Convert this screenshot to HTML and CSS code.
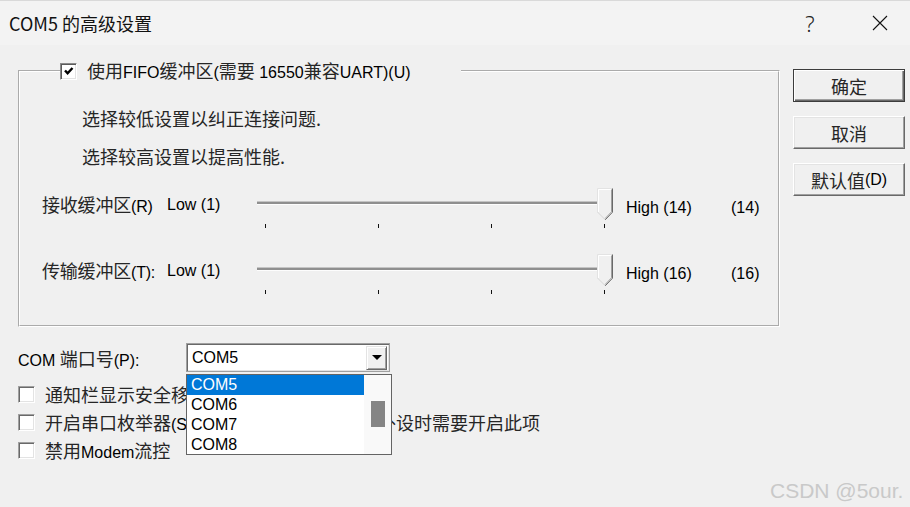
FILE: index.html
```html
<!DOCTYPE html>
<html lang="zh-CN">
<head>
<meta charset="utf-8">
<title>COM5 的高级设置</title>
<link rel="stylesheet" href="styles.css">
</head>
<body>
<header class="titlebar">
  <span class="title">COM5 的高级设置</span>
  <span class="tb-btn help">?</span>
  <span class="tb-btn close">
    <svg width="16" height="16" viewBox="0 0 16 16"><path d="M1 1 L15 15 M15 1 L1 15" stroke="#111" stroke-width="1.1" fill="none"/></svg>
  </span>
</header>

<div class="main">
  <fieldset class="group">
    <legend class="group-legend">
      <span class="cb cb-checked">
        <svg width="14" height="14" viewBox="0 0 14 14"><path d="M3 6.5 L5.6 9.2 L10.5 4" stroke="#000" stroke-width="2.4" fill="none"/></svg>
      </span>
      <span class="legend-text"><span class="zh">使用</span>FIFO<span class="zh">缓冲区</span>(<span class="zh">需要</span> 16550<span class="zh">兼容</span>UART)(U)</span>
    </legend>

    <p class="hint hint-first zh">选择较低设置以纠正连接问题.</p>
    <p class="hint zh">选择较高设置以提高性能.</p>

    <div class="slider-row slider-first">
      <span class="row-label"><span class="zh">接收缓冲区</span>(R)</span>
      <span class="low">Low (1)</span>
      <div class="track-area">
        <div class="track"></div>
        <div class="ticks"><i></i><i></i><i></i><i></i></div>
        <svg class="thumb" width="17" height="35" viewBox="0 0 17 35">
          <path d="M0.5 0.5 H15.5 V24 L8 32 L0.5 24 Z" fill="#f0f0f0"/>
          <path d="M0.5 24 V0.5 H15.5" fill="none" stroke="#e3e3e3"/>
          <path d="M1.5 24 V1.5 H14.5" fill="none" stroke="#fff"/>
          <path d="M15.5 0.5 V24.2 L8 32" fill="none" stroke="#696969"/>
          <path d="M14.5 1.5 V23.8 L8 30.6" fill="none" stroke="#a0a0a0"/>
          <path d="M0.5 24 L8 31.5" fill="none" stroke="#d6d6d6"/>
        </svg>
      </div>
      <span class="high">High (14)</span>
      <span class="value">(14)</span>
    </div>

    <div class="slider-row">
      <span class="row-label"><span class="zh">传输缓冲区</span>(T):</span>
      <span class="low">Low (1)</span>
      <div class="track-area">
        <div class="track"></div>
        <div class="ticks"><i></i><i></i><i></i><i></i></div>
        <svg class="thumb" width="17" height="35" viewBox="0 0 17 35">
          <path d="M0.5 0.5 H15.5 V24 L8 32 L0.5 24 Z" fill="#f0f0f0"/>
          <path d="M0.5 24 V0.5 H15.5" fill="none" stroke="#e3e3e3"/>
          <path d="M1.5 24 V1.5 H14.5" fill="none" stroke="#fff"/>
          <path d="M15.5 0.5 V24.2 L8 32" fill="none" stroke="#696969"/>
          <path d="M14.5 1.5 V23.8 L8 30.6" fill="none" stroke="#a0a0a0"/>
          <path d="M0.5 24 L8 31.5" fill="none" stroke="#d6d6d6"/>
        </svg>
      </div>
      <span class="high">High (16)</span>
      <span class="value">(16)</span>
    </div>
  </fieldset>

  <div class="buttons">
    <div class="btn btn-default"><span class="zh">确定</span></div>
    <div class="btn"><span class="zh">取消</span></div>
    <div class="btn"><span class="zh">默认值</span>(D)</div>
  </div>
</div>

<div class="bottom">
  <div class="port-row">
    <span class="port-label">COM <span class="zh">端口号</span>(P):</span>
    <div class="combo">
      <span class="combo-value">COM5</span>
      <span class="combo-btn"><i class="arrow"></i></span>
      <div class="dropdown">
        <ul class="options">
          <li class="selected">COM5</li>
          <li>COM6</li>
          <li>COM7</li>
          <li>COM8</li>
        </ul>
        <div class="scrollbar"><div class="scroll-thumb"></div></div>
      </div>
    </div>
  </div>

  <div class="checks">
    <div class="check-row"><span class="cb"></span><span class="zh">通知栏显示安全移除硬件图标</span></div>
    <div class="check-row"><span class="cb"></span><span><span class="zh">开启串口枚举器</span>(Serial Enumerator)&nbsp;&nbsp;&nbsp;<span class="zh">，连接外设时需要开启此项</span></span></div>
    <div class="check-row"><span class="cb"></span><span><span class="zh">禁用</span>Modem<span class="zh">流控</span></span></div>
  </div>
</div>

<div class="watermark">CSDN @5our.</div>
</body>
</html>
```

FILE: styles.css
```css
* { box-sizing: border-box; }

body {
  margin: 0;
  width: 910px;
  height: 507px;
  overflow: hidden;
  position: relative;
  background: #f0f0f0;
  font-family: "Liberation Sans", "Noto Sans CJK SC", sans-serif;
  font-size: 16px;
  color: #000;
}

.zh {
  font-family: "Noto Sans CJK SC", "Liberation Sans", sans-serif;
  font-size: 18px;
  color: #262626;
}

/* title bar */
.titlebar {
  height: 45px;
  display: flex;
  align-items: center;
  padding: 0 7px 0 9px;
  background: #f3f3f3;
  border-top: 1px solid #d9d9d9;
}
.title {
  flex: 1;
  font-family: "Noto Sans CJK SC", sans-serif;
  font-size: 18px;
  color: #111;
}
.tb-btn {
  width: 46px;
  display: flex;
  justify-content: center;
  align-items: center;
}
.help {
  font-family: "Noto Sans", sans-serif;
  font-weight: 300;
  font-size: 22px;
  color: #222;
}
.close { margin-left: 24px; }

/* main area */
.main {
  display: flex;
  align-items: flex-start;
  padding: 15px 0 0 18px;
}

.group {
  margin: 0;
  width: 762px;
  min-width: 0;
  border: 2px groove #fff;
  padding: 0 0 9px 0;
}
.group-legend {
  margin-left: 40px;
  padding: 0 50px 0 0;
  height: 22px;
  display: flex;
  align-items: center;
}
.legend-text { margin-left: 10px; line-height: 22px; }

.cb {
  width: 17px;
  height: 17px;
  flex: none;
  background: #fff;
  border: 1px solid;
  border-color: #a0a0a0 #fff #fff #a0a0a0;
  box-shadow: inset 1px 1px #696969, inset -1px -1px #e3e3e3;
  display: flex;
  align-items: center;
  justify-content: center;
}
.cb-checked {
  width: 17px;
  height: 17px;
  border-color: #8a8a8a #fff #fff #8a8a8a;
  box-shadow: inset 1px 1px #5a5a5a, inset -1px -1px #e3e3e3;
}

.hint {
  margin: 0;
  padding-left: 62px;
  line-height: 38px;
  height: 38px;
}
.hint-first { margin-top: 17px; }

.slider-row {
  display: grid;
  grid-template-columns: 125px 90px 369px 105px auto;
  height: 66px;
  padding-left: 22px;
}
.slider-first { margin-top: 9px; }

.row-label, .low {
  padding-top: 10px;
  line-height: 20px;
  white-space: nowrap;
}
.row-label { letter-spacing: -0.2px; }
.low { padding-top: 11px; }
.high, .value {
  padding-top: 14px;
  line-height: 20px;
  white-space: nowrap;
}

.track-area { position: relative; }
.track {
  margin-top: 17px;
  width: 348px;
  height: 4px;
  border-top: 1px solid #c4c4c4;
  border-bottom: 1px solid #fdfdfd;
  background: #8f8f8f;
}
.ticks {
  display: flex;
  justify-content: space-between;
  width: 340px;
  margin: 19px 0 0 8px;
}
.ticks i {
  display: block;
  width: 1px;
  height: 4px;
  background: #111;
}
.thumb {
  position: absolute;
  left: 340px;
  top: 4px;
}

/* buttons */
.buttons {
  display: flex;
  flex-direction: column;
  gap: 14px;
  margin: 9px 0 0 13px;
}
.btn {
  width: 112px;
  height: 33px;
  display: flex;
  align-items: center;
  justify-content: center;
  background: #f0f0f0;
  border: 1px solid;
  border-color: #fff #696969 #696969 #fff;
  box-shadow: inset -1px -1px #a0a0a0, inset 1px 1px #e3e3e3;
}
.btn-default {
  border: 1px solid #3c3c3c;
  box-shadow: inset 1px 1px #fff, inset -1px -1px #696969, inset -2px -2px #a0a0a0;
}

/* bottom area */
.bottom { padding: 16px 0 0 18px; }

.port-row {
  display: flex;
  align-items: center;
  height: 29px;
}
.port-label { width: 168px; white-space: nowrap; }

.combo {
  position: relative;
  width: 204px;
  height: 29px;
  display: flex;
  align-items: center;
  padding: 2px;
  background: #fff;
  border: 1px solid #a0a0a0;
  box-shadow: inset 1px 1px #696969, inset -1px -1px #e3e3e3;
}
.combo-value { flex: 1; padding-left: 3px; }
.combo-btn {
  width: 21px;
  height: 24px;
  display: flex;
  align-items: center;
  justify-content: center;
  background: #f0f0f0;
  border: 1px solid;
  border-color: #e3e3e3 #696969 #696969 #e3e3e3;
  box-shadow: inset 1px 1px #fff, inset -1px -1px #a0a0a0;
}
.arrow {
  width: 0;
  height: 0;
  border-left: 5px solid transparent;
  border-right: 5px solid transparent;
  border-top: 5px solid #000;
}

.dropdown {
  position: absolute;
  left: -1px;
  top: 30px;
  width: 206px;
  height: 81px;
  border: 1px solid #646464;
  background: #fff;
  display: flex;
}
.options {
  list-style: none;
  margin: 0;
  padding: 0;
  width: 177px;
}
.options li {
  height: 20px;
  line-height: 20px;
  padding-left: 4px;
}
.options li.selected {
  background: #0078d7;
  color: #fff;
}
.scrollbar {
  flex: 1;
  background: #f9f9f9;
  padding: 26px 0 0 7px;
}
.scroll-thumb {
  width: 14px;
  height: 26px;
  background: #858585;
}

.checks { margin-top: 8px; }
.check-row {
  display: flex;
  align-items: center;
  gap: 10px;
  height: 28px;
  white-space: nowrap;
}

.watermark {
  position: absolute;
  left: 770px;
  top: 479px;
  font-family: "Liberation Sans", sans-serif;
  font-size: 21px;
  line-height: 24px;
  color: #c9c9c9;
}
```
